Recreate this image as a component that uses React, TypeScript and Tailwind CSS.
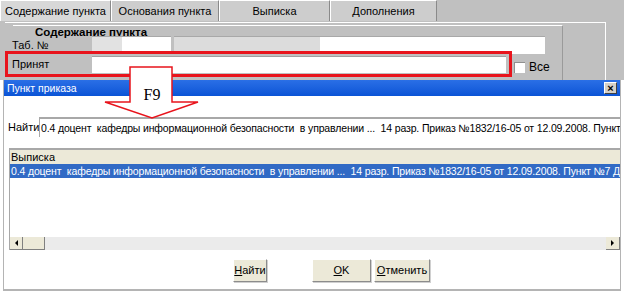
const searchText =
  '0.4 доцент  кафедры информационной безопасности  в управлении ...  14 разр. Приказ №1832/16-05 от 12.09.2008. Пункт №7 Д';

function Tab({ label, w, active }: { label: string; w: string; active?: boolean }) {
  return (
    <div
      className={`${w} h-[21px] flex items-center justify-center border-t border-l border-white border-r border-r-[#8a8a8a] ${
        active ? 'bg-[#d8d8d8]' : 'bg-[#cdcdcd]'
      }`}
    >
      {label}
    </div>
  );
}

function Btn({ w, children }: { w: string; children: React.ReactNode }) {
  return (
    <div
      className={`${w} h-[23px] flex items-center justify-center bg-[#ece9d8] border border-t-white border-l-white border-r-[#8c8c8c] border-b-[#8c8c8c] shadow-[1px_1px_0_#d0d0d0]`}
    >
      {children}
    </div>
  );
}

export default function App() {
  return (
    <div className="relative w-[624px] h-[296px] overflow-hidden bg-white text-[11px] leading-none text-black font-['Liberation_Sans',Arial,sans-serif]">
      {/* Main form (background) */}
      <div className="h-[80px] bg-[#c0c0c0] flex flex-col">
        <div className="flex h-[21px]">
          <Tab label="Содержание пункта" w="w-[111px]" active />
          <Tab label="Основания пункта" w="w-[108px]" />
          <Tab label="Выписка" w="w-[111px]" />
          <Tab label="Дополнения" w="w-[107px]" />
        </div>
        <div className="ml-[5px] w-[601px] flex-1 mt-[1px] border-t border-r border-white">
          <div className="ml-[8px] mt-[2px] w-[550px] h-[56px] border-t border-white border-r border-r-[#9a9a9a] flex flex-col">
            <div className="h-[11px] pl-[22px] pt-[1px] font-bold text-[11.5px]">Содержание пункта</div>
            <div className="flex items-center h-[18px] mt-[-1px]">
              <div className="w-[80px] -ml-[1px]">Таб. №</div>
              <div className="w-[79px] h-[18px] flex border-t border-[#a8a8a8]">
                <div className="w-[30px] bg-[#e2e2e2]" />
                <div className="flex-1 bg-white" />
              </div>
              <div className="ml-[3px] w-[371px] h-[18px] flex border-t border-[#a8a8a8]">
                <div className="w-[146px] bg-[#dcdcdc]" />
                <div className="flex-1 bg-white" />
              </div>
            </div>
          </div>
        </div>
      </div>

      {/* Red highlight on "Принят" row */}
      <div className="absolute left-[5px] top-[51px] w-[507px] h-[26px] border-[3px] border-[#e8141c] bg-[#c0c0c0] flex items-center">
        <div className="w-[84px] pl-[4px]">Принят</div>
        <div className="w-[414px] h-[17px] bg-white border-t border-[#a0a0a0]" />
      </div>
      <div className="absolute left-[514px] top-[61px] flex items-center gap-[4px]">
        <div className="w-[11px] h-[11px] bg-white border-t border-l border-[#909090]" />
        <span className="text-[12px]">Все</span>
      </div>

      {/* Dialog */}
      <div className="absolute left-[3px] top-[80px] w-[618px] h-[211px] bg-white border-l border-r border-b-2 border-[#b4b4b4] flex flex-col">
        <div className="h-[16px] bg-gradient-to-b from-[#2a6fe6] to-[#0a54d6] flex items-center justify-between pl-[3px] pr-[3px] text-white">
          <span className="text-[10.5px]">Пункт приказа</span>
          <div className="w-[13px] h-[12px] bg-[#d4d0c8] border border-t-white border-l-white border-r-[#404040] border-b-[#404040] flex items-center justify-center text-black font-bold text-[11px]">
            ×
          </div>
        </div>

        <div className="flex items-center mt-[21px] h-[20px]">
          <span className="pl-[4px] w-[35px]">Найти</span>
          <div className="flex-1 h-[20px] border-t-2 border-l border-[#a8a8a8] flex items-center pl-[1px] overflow-hidden whitespace-pre text-[10.5px] tracking-[-0.15px]">
            {searchText}
          </div>
        </div>

        <div className="ml-[5px] mt-[11px] h-[102px] border-t-2 border-l border-[#a8a8a8] flex flex-col overflow-hidden">
          <div className="h-[14px] bg-[#ece9d8] flex items-center pl-[1px]">Выписка</div>
          <div className="h-[14px] bg-[#316ac5] text-white flex items-center pl-[1px] whitespace-pre overflow-hidden text-[10.5px] tracking-[-0.15px]">
            {searchText}
          </div>
          <div className="flex-1" />
          <div className="h-[13px] bg-[#ebebeb] flex">
            <div className="w-[13px] h-[13px] bg-[#ece9d8] border-r border-b border-[#808080] flex items-center justify-center">
              <div className="w-0 h-0 border-y-[3px] border-y-transparent border-r-[3px] border-r-black" />
            </div>
            <div className="w-[22px] h-[13px] bg-[#ece9d8] border-r border-b border-[#808080]" />
            <div className="flex-1" />
            <div className="w-[14px] h-[13px] bg-[#ece9d8] border-r border-b border-[#808080] flex items-center justify-center">
              <div className="w-0 h-0 border-y-[3px] border-y-transparent border-l-[3px] border-l-black" />
            </div>
          </div>
        </div>

        <div className="flex mt-[9px]">
          <div className="ml-[229px]">
            <Btn w="w-[34px]">
              <span>
                <u>Н</u>айти
              </span>
            </Btn>
          </div>
          <div className="ml-[45px]">
            <Btn w="w-[59px]">
              <span>
                <u>O</u>K
              </span>
            </Btn>
          </div>
          <div className="ml-[3px]">
            <Btn w="w-[56px]">
              <span>
                <u>О</u>тменить
              </span>
            </Btn>
          </div>
        </div>
      </div>

      {/* F9 arrow overlay */}
      <svg className="absolute left-0 top-0" width="624" height="296">
        <polygon
          points="130,67 172,67 172,102 198,102 152,118 105,102 130,102"
          fill="white"
          stroke="#e8141c"
          strokeWidth="1.5"
          strokeLinejoin="miter"
        />
        <text
          x="152"
          y="100"
          textAnchor="middle"
          fontFamily="Liberation Serif, serif"
          fontSize="16"
          fill="black"
        >
          F9
        </text>
      </svg>
    </div>
  );
}
